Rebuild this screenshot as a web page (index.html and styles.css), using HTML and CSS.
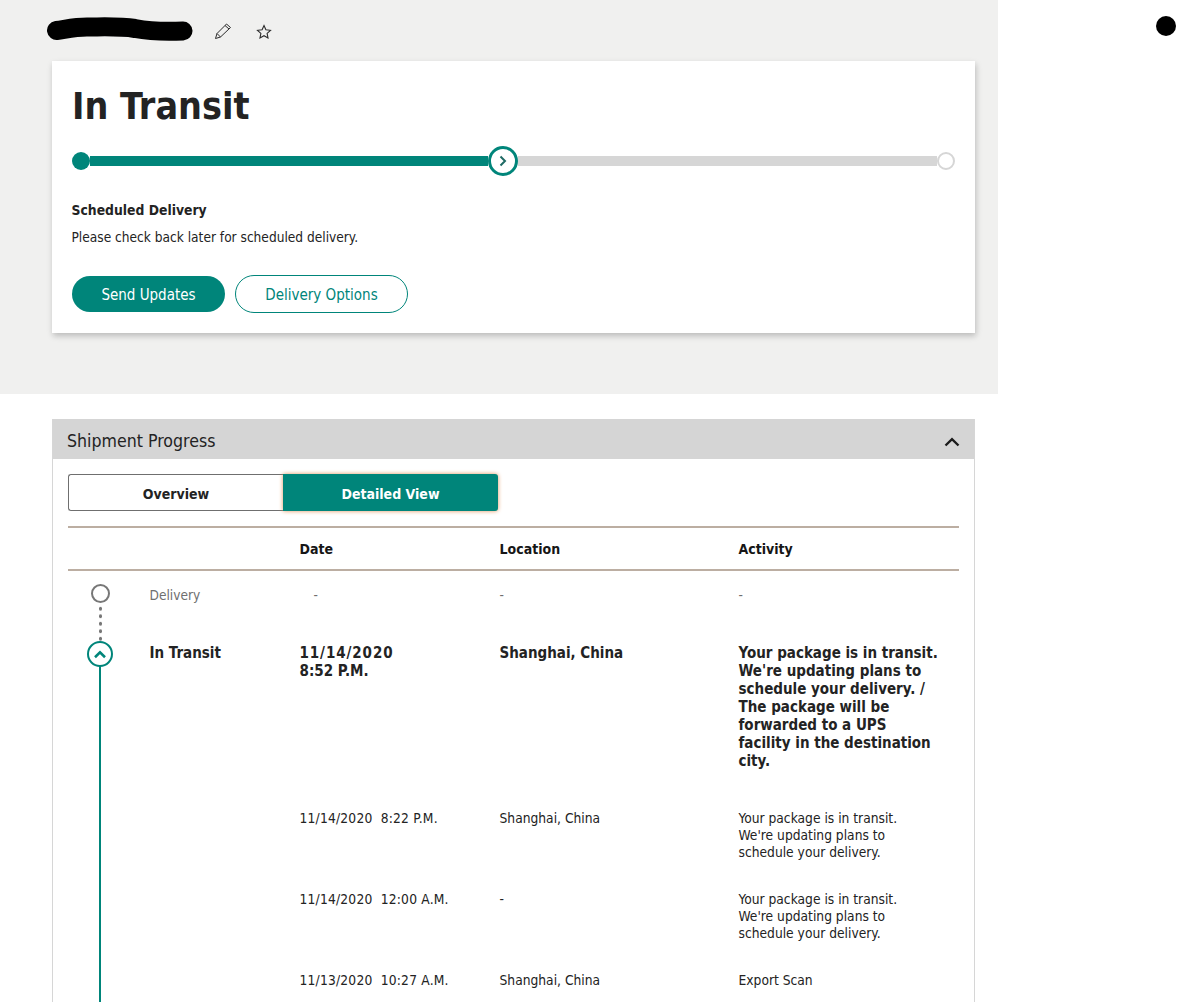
FILE: index.html
```html
<!DOCTYPE html>
<html lang="en">
<head>
<meta charset="utf-8">
<title>In Transit</title>
<link rel="stylesheet" href="styles.css">
</head>
<body>
<svg class="dot" width="20" height="20" viewBox="0 0 20 20" aria-hidden="true"><circle cx="10" cy="10" r="10"/></svg>
<section class="hero">
  <div class="titlebar">
    <svg class="scribble" width="146" height="28" viewBox="0 0 146 28" aria-hidden="true"><path d="M9.500 13.500C20 12 28 10 40 10C55 10 72 9 88 11.500C104 14.500 116 15 136 14" fill="none" stroke="#000" stroke-width="19" stroke-linecap="round"/></svg>
    <svg class="pencil" width="18" height="18" viewBox="0 0 18 18" aria-hidden="true"><path d="M1.500 16.500L3 11.500L12.500 2L16.500 5.500L6.500 15ZM3 11.500L6.500 15M11 3.500L15 7" fill="none" stroke="#2b2b2b" stroke-width="1"/></svg>
    <svg class="star" width="16" height="16" viewBox="0 0 16 16" aria-hidden="true"><path d="M8 1.500L9.900 5.800L14.500 6.300L11.100 9.400L12 14L8 11.700L4 14L4.900 9.400L1.500 6.300L6.100 5.800Z" fill="none" stroke="#2b2b2b" stroke-width="1.100"/></svg>
  </div>
  <div class="card">
    <h1 class="status">In Transit</h1>
    <div class="progress">
      <span class="start"></span>
      <span class="fill"></span>
      <span class="now"><svg width="10" height="12" viewBox="0 0 10 12" aria-hidden="true"><path d="M2.500 1.500L7 6L2.500 10.500" fill="none" stroke="#1f6a64" stroke-width="2"/></svg></span>
      <span class="rest"></span>
      <span class="end"></span>
    </div>
    <h2 class="sched">Scheduled Delivery</h2>
    <p class="note">Please check back later for scheduled delivery.</p>
    <div class="actions">
      <a class="btn solid">Send Updates</a>
      <a class="btn outline">Delivery Options</a>
    </div>
  </div>
</section>
<section class="panel">
  <header class="panel-head">
    <span class="panel-title">Shipment Progress</span>
    <svg width="16" height="10" viewBox="0 0 16 10" aria-hidden="true"><path d="M1.500 8.500L8 2.200L14.500 8.500" fill="none" stroke="#1c1c1c" stroke-width="2.400"/></svg>
  </header>
  <div class="panel-body">
    <div class="toggle">
      <a class="tab">Overview</a>
      <a class="tab active">Detailed View</a>
    </div>
    <div class="row thead">
      <span></span><span></span><span>Date</span><span>Location</span><span>Activity</span>
    </div>
    <div class="row r-delivery">
      <span class="rail"><i class="pending"></i><i class="dots"></i></span>
      <span class="muted">Delivery</span>
      <span class="muted dash">-</span>
      <span class="muted">-</span>
      <span class="muted">-</span>
    </div>
    <div class="row r-current">
      <span class="rail"><i class="line"></i><i class="current"><svg width="14" height="9" viewBox="0 0 14 9" aria-hidden="true"><path d="M2 7.200L7 2.400L12 7.200" fill="none" stroke="#00857a" stroke-width="2.600"/></svg></i></span>
      <span>In Transit</span>
      <span><span class="day">11/14/2020</span><br>8:52 P.M.</span>
      <span>Shanghai, China</span>
      <span>Your package is in transit. We're updating plans to schedule your delivery. / The package will be forwarded to a UPS facility in the destination city.</span>
    </div>
    <div class="row r-event">
      <span class="rail"><i class="line"></i></span>
      <span></span>
      <span class="when">11/14/2020  8:22 P.M.</span>
      <span>Shanghai, China</span>
      <span>Your package is in transit. We're updating plans to schedule your delivery.</span>
    </div>
    <div class="row r-event">
      <span class="rail"><i class="line"></i></span>
      <span></span>
      <span class="when">11/14/2020  12:00 A.M.</span>
      <span>-</span>
      <span>Your package is in transit. We're updating plans to schedule your delivery.</span>
    </div>
    <div class="row r-event r-last">
      <span class="rail"><i class="line"></i></span>
      <span></span>
      <span class="when">11/13/2020  10:27 A.M.</span>
      <span>Shanghai, China</span>
      <span>Export Scan</span>
    </div>
  </div>
</section>
</body>
</html>
```
FILE: styles.css
```css
* { box-sizing: border-box; }
html, body { margin: 0; height: 1002px; overflow: hidden; background: #fff; }
body { font-family: "DejaVu Sans Condensed", "DejaVu Sans", sans-serif; color: #232323; font-size: 14px; }
.dot { position: absolute; left: 1156px; top: 16px; fill: #000; }

.hero { width: 998px; height: 394px; background: #f0f0ef; padding: 17px 23px 0 52px; }
.titlebar { display: flex; align-items: center; height: 28px; margin-left: -5px; }
.scribble { display: block; }
.pencil { margin-left: 21px; }
.star { margin-left: 24px; margin-top: 1px; }
.card { background: #fff; margin-top: 16px; height: 272px; padding: 22px 20px 0 20px; box-shadow: 1px 3px 6px rgba(0,0,0,.22); }
.status { margin: 0; font-size: 37.300px; line-height: 46px; font-weight: 700; }
.progress { display: flex; align-items: center; height: 30px; margin-top: 17px; }
.start { width: 18px; height: 18px; border-radius: 50%; background: #00857a; flex: none; }
.fill { width: 398px; height: 10px; background: #00857a; flex: none; }
.now { width: 30px; height: 30px; border: 3px solid #00857a; border-radius: 50%; display: flex; align-items: center; justify-content: center; flex: none; background: #fff; }
.rest { flex: 1; height: 10px; background: #d6d6d6; }
.end { width: 18px; height: 18px; border: 2px solid #d6d6d6; border-radius: 50%; background: #fff; flex: none; }
.sched { margin: 25px 0 0 -.5px; font-size: 13.800px; line-height: 18px; font-weight: 700; }
.note { margin: 9px 0 0 -.5px; font-size: 13.600px; line-height: 18px; }
.actions { display: flex; align-items: center; gap: 10px; margin-top: 29px; }
.btn { display: flex; align-items: center; justify-content: center; font-size: 15px; border-radius: 19px; padding-top: 2px; }
.solid { width: 153px; height: 36px; background: #00857a; color: #fff; }
.outline { width: 173px; height: 38px; border: 1px solid #00857a; color: #00857a; }

.panel { width: 923px; height: 583px; margin: 25px 0 0 52px; border: 1px solid #d6d6d6; border-width: 0 1px; overflow: hidden; }
.panel-head { display: flex; align-items: center; justify-content: space-between; height: 40px; padding: 0 14px; background: #d5d5d5; }
.panel-title { font-size: 17.600px; padding-top: 4px; }
.panel-head svg { margin-top: 5px; }
.panel-body { padding: 15px 15px 0; }
.toggle { display: flex; width: 430px; height: 37px; font-size: 14px; font-weight: 700; }
.tab { display: flex; align-items: center; justify-content: center; padding-top: 2px; }
.tab:first-child { width: 215px; border: 1px solid #6f6f6f; border-right: 0; border-radius: 3px 0 0 3px; }
.active { flex: 1; background: #00857a; color: #fff; border-radius: 0 3px 3px 0; box-shadow: 0 0 4px #e0935a; }

.row { display: grid; grid-template-columns: 81.500px 150px 200px 239px 1fr; }
.thead { margin-top: 15px; height: 45px; align-items: center; font-weight: 700; border-top: 2px solid #bcaea2; border-bottom: 2px solid #bcaea2; font-size: 14px; color: #161616; }
.rail { position: relative; display: block; }
.rail i { position: absolute; display: block; }
.r-delivery { height: 71px; padding-top: 15px; line-height: 18px; font-size: 13.600px; }
.muted { color: #6f6f6f; }
.dash { padding-left: 14px; }
.pending { left: 22.500px; top: -2px; width: 19px; height: 19px; border: 2px solid #777; border-radius: 50%; }
.dots { left: 30.500px; top: 19px; height: 36px; width: 3px; background: radial-gradient(circle, #777 1.500px, transparent 2px) 0 0 / 3px 7.500px repeat-y; }
.r-current { height: 168px; font-weight: 700; font-size: 15px; line-height: 18px; padding-top: 2px; }
.r-current > span:last-child { padding-right: 20px; }
.day { letter-spacing: .9px; }
.current { left: 19px; top: -3px; width: 26px; height: 26px; border: 2px solid #00857a; border-radius: 50%; background: #fff; display: flex !important; align-items: center; justify-content: center; z-index: 1; }
.line { left: 31px; top: 0; bottom: 0; width: 2px; background: #00857a; }
.r-event { height: 81px; line-height: 17px; font-size: 13.700px; }
.r-last { height: 31px; }
.r-event > span:last-child { padding-right: 50px; }
.when { white-space: pre; letter-spacing: .2px; }
```
